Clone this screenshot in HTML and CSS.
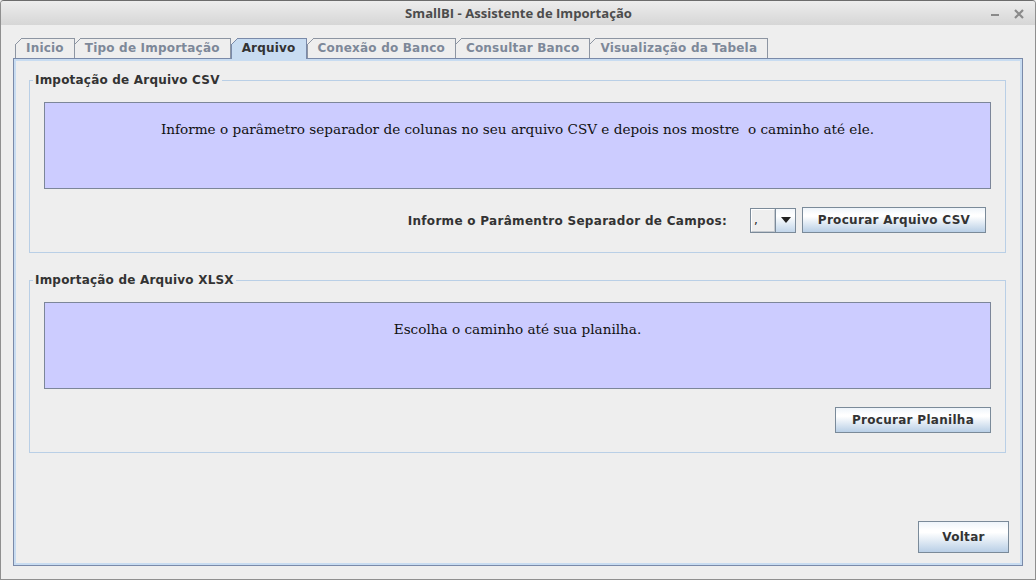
FILE: index.html
```html
<!DOCTYPE html>
<html lang="pt">
<head>
<meta charset="utf-8">
<title>SmallBI - Assistente de Importação</title>
<link rel="stylesheet" href="styles.css">
</head>
<body>
<div class="window">
  <div class="titlebar">
    <span class="title">SmallBI - Assistente de Importação</span>
    <div class="controls">
      <svg class="ctl" width="12" height="12" viewBox="0 0 12 12"><rect x="2" y="6" width="8" height="2" fill="#8a8a8a"/></svg>
      <svg class="ctl" width="12" height="12" viewBox="0 0 12 12"><path d="M2 2 L10 10 M10 2 L2 10" stroke="#8a8a8a" stroke-width="2.2" fill="none"/></svg>
    </div>
  </div>
  <div class="content">
    <div class="tabs">
      <div class="tab">Inicio</div>
      <div class="tab">Tipo de Importação</div>
      <div class="tab tab-selected">Arquivo</div>
      <div class="tab">Conexão do Banco</div>
      <div class="tab">Consultar Banco</div>
      <div class="tab">Visualização da Tabela</div>
    </div>
    <div class="panel">
      <fieldset class="group">
        <legend class="group-title">Impotação de Arquivo CSV</legend>
        <div class="info">Informe o parâmetro separador de colunas no seu arquivo CSV e depois nos mostre&nbsp; o caminho até ele.</div>
        <div class="row row-csv">
          <span class="label">Informe o Parâmentro Separador de Campos:</span>
          <div class="combo">
            <span class="combo-value">,</span>
            <span class="combo-arrow"><svg width="10" height="6" viewBox="0 0 10 6"><path d="M0 0 H10 L5 6 Z" fill="#222"/></svg></span>
          </div>
          <button class="btn btn-csv">Procurar Arquivo CSV</button>
        </div>
      </fieldset>
      <fieldset class="group group-xlsx">
        <legend class="group-title">Importação de Arquivo XLSX</legend>
        <div class="info">Escolha o caminho até sua planilha.</div>
        <div class="row">
          <button class="btn btn-sheet">Procurar Planilha</button>
        </div>
      </fieldset>
      <div class="footer">
        <button class="btn btn-back">Voltar</button>
      </div>
    </div>
  </div>
</div>
</body>
</html>
```
FILE: styles.css
```css
html, body {
  margin: 0;
  padding: 0;
  background: #eeeeee;
}

body {
  font-family: "DejaVu Sans", sans-serif;
  font-size: 12px;
  color: #333333;
}

.window {
  width: 1036px;
  height: 580px;
  box-sizing: border-box;
  border: 1px solid #8f8f8f;
  border-top-color: #6c6c6c;
  border-radius: 4px 4px 0 0;
  background: #eeeeee;
  display: flex;
  flex-direction: column;
  overflow: hidden;
}

/* ---------- title bar ---------- */
.titlebar {
  flex: none;
  height: 24px;
  display: grid;
  grid-template-columns: 1fr auto 1fr;
  align-items: center;
  background: linear-gradient(#ededed, #d6d6d6);
}

.title {
  grid-column: 2;
  font-family: "Open Sans", "DejaVu Sans", sans-serif;
  font-weight: bold;
  font-size: 13.1px;
  color: #4c4c4c;
  padding-left: 1px;
}

.controls {
  grid-column: 3;
  justify-self: end;
  display: flex;
  align-items: center;
  gap: 12px;
  padding-right: 10px;
  padding-top: 1px;
}

.ctl {
  display: block;
}

/* ---------- content ---------- */
.content {
  flex: 1;
  min-height: 0;
  display: flex;
  flex-direction: column;
  padding: 13px 12px 13px 12px;
}

.tabs {
  flex: none;
  display: flex;
  align-items: flex-end;
  height: 20px;
  padding-left: 2px;
  position: relative;
  z-index: 1;
}

.tab {
  --b: #8d95a2;
  --f: #eeeeee;
  height: 20px;
  box-sizing: border-box;
  padding: 1px 10px 0 11px;
  border-right: 1px solid var(--b);
  font-weight: bold;
  font-size: 12px;
  letter-spacing: 0.2px;
  line-height: 18px;
  color: #7d8899;
  white-space: nowrap;
  background:
    linear-gradient(var(--b), var(--b)) 6px 0 / 100% 1px no-repeat,
    linear-gradient(var(--b), var(--b)) 0 6px / 1px 100% no-repeat,
    linear-gradient(to bottom right, transparent calc(50% - 0.7px), var(--b) calc(50% - 0.7px), var(--b) calc(50% + 0.5px), transparent calc(50% + 0.5px)) 0 0 / 7px 7px no-repeat,
    linear-gradient(to bottom right, transparent 50%, var(--f) 50%) 0 0 / 7px 7px no-repeat,
    linear-gradient(var(--f), var(--f)) 7px 0 / 100% 100% no-repeat,
    linear-gradient(var(--f), var(--f)) 0 7px / 7px 100% no-repeat;
}

.tab + .tab {
  margin-left: -1px;
}

.tab-selected {
  --b: #7a8aa9;
  --f: #c8dcf1;
  color: #333333;
  height: 21px;
  margin-bottom: -1px;
  margin-left: 0 !important;
  line-height: 19px;
}

.tab-selected + .tab {
  margin-left: 0;
}

.panel {
  flex: 1;
  min-height: 0;
  display: flex;
  flex-direction: column;
  border: 1px solid #7a8aa9;
  box-shadow: inset 0 0 0 2px #c8dcf1;
  padding: 14px 13px 12px 15px;
}

/* ---------- group boxes ---------- */
.group {
  margin: 0 3px 0 0;
  min-width: 0;
  border: 1px solid #b9cfe6;
  padding: 15px 14px 19px 14px;
}

.group-xlsx {
  margin-top: 20px;
}

.group-title {
  margin-left: -11px;
  padding: 0 2px;
  font-weight: bold;
  font-size: 12px;
  letter-spacing: 0.2px;
  line-height: 14px;
  color: #333333;
}

.info {
  height: 87px;
  box-sizing: border-box;
  border: 1px solid #7c8699;
  background: #ccccff;
  padding-top: 18px;
  text-align: center;
  font-family: "DejaVu Serif", serif;
  font-size: 13.6px;
  line-height: 16px;
  color: #111111;
  white-space: pre-wrap;
}

.row {
  display: flex;
  justify-content: flex-end;
  align-items: center;
  margin-top: 18px;
}

.row-csv {
  padding-right: 5px;
}

.label {
  font-weight: bold;
  font-size: 12px;
  letter-spacing: 0.3px;
  color: #333333;
  margin-right: 23px;
  margin-top: 1px;
}

.combo {
  display: flex;
  height: 25px;
  width: 46px;
  box-sizing: border-box;
  border: 1px solid #7b8a99;
  margin-right: 6px;
}

.combo-value {
  flex: 1;
  box-sizing: border-box;
  border: 1px solid #ffffff;
  border-right-color: #c4c9cf;
  border-bottom-color: #c4c9cf;
  background: #eeeeee;
  font-size: 12px;
  line-height: 20px;
  padding-left: 2px;
  color: #222;
}

.combo-arrow {
  width: 20px;
  box-sizing: border-box;
  border-left: 1px solid #7b8a99;
  display: flex;
  align-items: center;
  justify-content: center;
  background: linear-gradient(#f4f8fc 0%, #ffffff 30%, #c2d6ea 100%);
}

.btn {
  height: 26px;
  box-sizing: border-box;
  border: 1px solid #7a8a99;
  background: linear-gradient(#eef4fa 0%, #ffffff 28%, #ffffff 35%, #b9cfe6 100%);
  font-family: "DejaVu Sans", sans-serif;
  font-weight: bold;
  font-size: 12px;
  letter-spacing: 0.3px;
  color: #333333;
  padding: 0 10px;
  margin: 0;
}

.btn-csv {
  width: 184px;
}

.btn-sheet {
  width: 156px;
}

.footer {
  margin-top: auto;
  display: flex;
  justify-content: flex-end;
}

.btn-back {
  width: 91px;
  height: 32px;
}
```
